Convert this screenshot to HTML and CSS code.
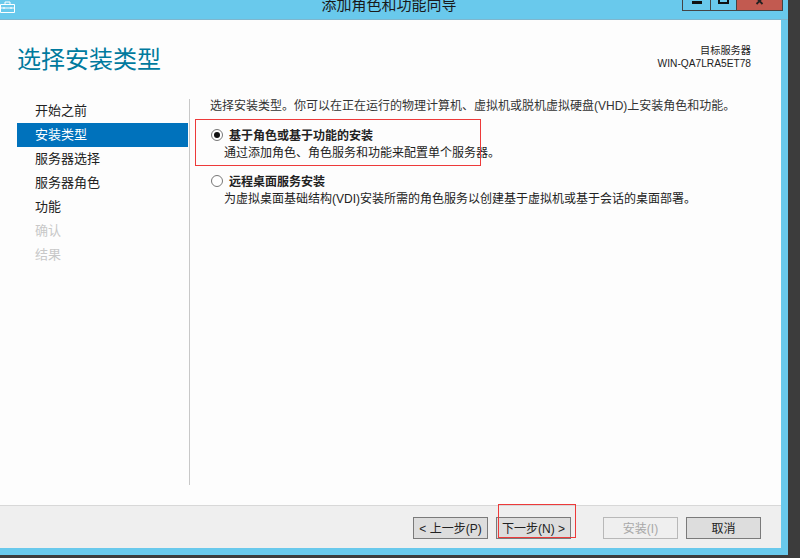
FILE: index.html
```html
<!DOCTYPE html>
<html lang="zh-CN">
<head>
    <meta charset="UTF-8">
    <meta name="viewport" content="width=device-width, initial-scale=1.0">
    <title>添加角色和功能向导</title>
    <link rel="stylesheet" href="styles.css">
</head>
<body>

    <div class="window">
        <div class="titlebar">
            <svg class="app-icon" width="16" height="12" viewBox="0 0 16 12">
                <path d="M0.5 3.500h14v8h-14z M5 3.500v-2.500h5v2.500 M0.500 7h14 M4 6v2 M11 6v2" fill="none" stroke="#fff" stroke-width="1"/>
            </svg>
            <div class="title-text">添加角色和功能向导</div>
            <div class="win-buttons">
                <div class="win-btn win-min"><span class="min-glyph"></span></div>
                <div class="win-btn win-max"><span class="max-glyph"></span></div>
                <div class="win-btn win-close">
                    <svg width="10" height="5" viewBox="0 0 10 5"><path d="M1.500 -2l6 6 M7.500 -2l-6 6" stroke="#222" stroke-width="1.800" fill="none"/></svg>
                </div>
            </div>
        </div>

        <div class="panel">
            <div class="header">
                <h1>选择安装类型</h1>
                <div class="target">
                    <div>目标服务器</div>
                    <div>WIN-QA7LRA5ET78</div>
                </div>
            </div>

            <div class="main">
                <div class="nav">
                    <div class="nav-item">开始之前</div>
                    <div class="nav-item active">安装类型</div>
                    <div class="nav-item">服务器选择</div>
                    <div class="nav-item">服务器角色</div>
                    <div class="nav-item">功能</div>
                    <div class="nav-item disabled">确认</div>
                    <div class="nav-item disabled">结果</div>
                </div>
                <div class="content">
                    <p class="intro">选择安装类型。你可以在正在运行的物理计算机、虚拟机或脱机虚拟硬盘(VHD)上安装角色和功能。</p>
                    <div class="option">
                        <span class="radio checked"></span>
                        <div class="option-text">
                            <div class="option-name">基于角色或基于功能的安装</div>
                            <div class="option-desc">通过添加角色、角色服务和功能来配置单个服务器。</div>
                        </div>
                    </div>
                    <div class="option">
                        <span class="radio"></span>
                        <div class="option-text">
                            <div class="option-name">远程桌面服务安装</div>
                            <div class="option-desc">为虚拟桌面基础结构(VDI)安装所需的角色服务以创建基于虚拟机或基于会话的桌面部署。</div>
                        </div>
                    </div>
                </div>
            </div>

            <div class="footer">
                <button class="btn">&lt; 上一步(P)</button>
                <button class="btn btn-next">下一步(N) &gt;</button>
                <button class="btn btn-install" disabled>安装(I)</button>
                <button class="btn">取消</button>
            </div>
        </div>
    </div>

    <!-- 截图上的红色标注框 -->
    <div class="mark mark-option"></div>
    <div class="mark mark-next"></div>

</body>
</html>
```

FILE: styles.css
```css
body {
    margin: 0;
    width: 800px;
    height: 558px;
    overflow: hidden;
    position: relative;
    background-color: #3c3c3c;
    font-family: "Liberation Sans", "Noto Sans CJK SC", sans-serif;
    font-size: 12px;
    color: #1a1a1a;
}
.window {
    width: 788px;
    height: 555px;
    background-color: #69c9ec;
    display: flex;
    flex-direction: column;
}
.titlebar {
    height: 20px;
    flex: none;
    position: relative;
    box-sizing: border-box;
    border-bottom: 1px solid #7fb6cd;
    overflow: hidden;
}
.app-icon {
    position: absolute;
    left: 0;
    top: 1px;
}
.title-text {
    text-align: center;
    font-size: 15px;
    line-height: 15px;
    margin-top: -3px;
    padding-right: 10px;
    color: #1a1a1a;
}
.win-buttons {
    position: absolute;
    right: 5px;
    top: 0;
    height: 11px;
    display: flex;
    box-sizing: border-box;
    border: 1px solid #444;
    border-top: none;
}
.win-btn {
    height: 10px;
    display: flex;
    justify-content: center;
    position: relative;
}
.win-min {
    width: 27px;
    border-right: 1px solid #444;
}
.win-max {
    width: 25px;
    border-right: 1px solid #444;
}
.win-close {
    width: 45px;
    background-color: #c25a50;
}
.min-glyph {
    width: 10px;
    height: 3px;
    background-color: #111;
    margin-top: 1px;
}
.max-glyph {
    width: 7px;
    height: 2px;
    border: 2px solid #111;
    border-top: none;
}
.panel {
    width: 781px;
    height: 528px;
    flex: none;
    background-color: #fdfdfd;
    display: flex;
    flex-direction: column;
}
.header {
    height: 79px;
    flex: none;
    display: flex;
    justify-content: space-between;
    padding: 0 30px 0 17px;
}
.header h1 {
    margin: 25px 0 0;
    font-size: 24px;
    line-height: 30px;
    font-weight: normal;
    color: #007a9e;
}
.target {
    margin-top: 24px;
    text-align: right;
    font-size: 10.2px;
    line-height: 13px;
    color: #222;
}
.main {
    flex: 1;
    display: flex;
    min-height: 0;
}
.nav {
    width: 171px;
    margin-left: 17px;
    flex: none;
}
.nav-item {
    height: 24px;
    line-height: 24px;
    padding-left: 18px;
    font-size: 13px;
    color: #222;
}
.nav-item.active {
    background-color: #0072bc;
    color: #fff;
}
.nav-item.disabled {
    color: #c8c8c8;
}
.content {
    margin-left: 1px;
    height: 386px;
    padding-left: 19px;
    border-left: 1px solid #c8c8c8;
    flex: 1;
}
.intro {
    margin: 0 0 14px 1px;
    line-height: 14px;
    color: #333;
}
.option {
    display: flex;
    margin-bottom: 11px;
    line-height: 18px;
}
.radio {
    width: 10px;
    height: 10px;
    flex: none;
    margin: 2px 6px 0 2px;
    border: 1px solid #777;
    border-radius: 50%;
    background-color: #fff;
    position: relative;
}
.radio.checked::after {
    content: "";
    position: absolute;
    left: 2px;
    top: 2px;
    width: 6px;
    height: 6px;
    border-radius: 50%;
    background-color: #111;
}
.option-text {
    margin-left: -1px;
    color: #222;
}
.option-name {
    font-weight: bold;
    margin-left: 1px;
}
.option-desc {
    margin-left: -4px;
    line-height: 17px;
}
.footer {
    height: 43px;
    flex: none;
    box-sizing: border-box;
    border-top: 1px solid #d8d8d8;
    background-color: #efefef;
    display: flex;
    justify-content: flex-end;
    padding: 11px 20px 0 0;
}
.btn {
    width: 75px;
    height: 22px;
    padding: 0 0 2px;
    margin-left: 8px;
    border: 1px solid #7a7a7a;
    background-color: #dddddd;
    font-family: inherit;
    font-size: 12px;
    color: #222;
}
.btn-next {
    margin-right: 24px;
}
.btn-install {
    border-color: #b8b8b8;
    background-color: #efefef;
    color: #a8a8a8;
}
.mark {
    position: absolute;
    box-sizing: border-box;
    border: 1px solid #ed3a3a;
}
.mark-option {
    left: 195px;
    top: 119px;
    width: 286px;
    height: 47px;
}
.mark-next {
    left: 498px;
    top: 504px;
    width: 78px;
    height: 34px;
}
```
